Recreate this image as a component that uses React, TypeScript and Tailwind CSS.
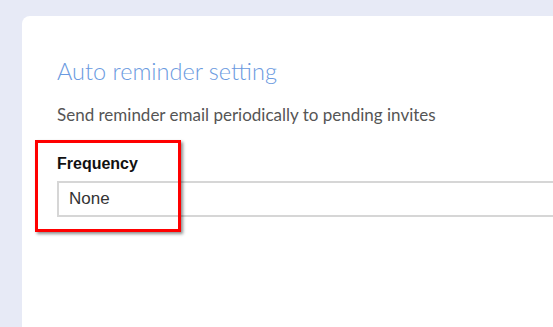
export default function App() {
  return (
    <div className="relative h-[327px] w-[553px] overflow-hidden bg-[#e7eaf6] pl-[22px] pt-[16px]">
      <div className="h-[400px] w-[700px] rounded-tl-[8px] bg-white pl-[35px] pt-[40px]">
        <h1 className="font-['Lato',sans-serif] text-[23.5px] font-light leading-[30px] text-[#6b9ae0]">
          Auto reminder setting
        </h1>
        <p className="mt-[19px] font-['Lato',sans-serif] text-[17px] leading-[20px] text-[#555555]">
          Send reminder email periodically to pending invites
        </p>
        <label className="mt-[30px] block font-['Liberation_Sans',sans-serif] text-[16px] font-bold leading-[18px] text-[#111111]">
          Frequency
        </label>
        <div className="mt-[8px] flex h-[36px] w-[600px] items-center border-2 border-[#d6d6d6] pl-[10px] font-['Liberation_Sans',sans-serif] text-[17px] text-[#333333]">
          None
        </div>
      </div>
      <div className="absolute left-[35px] top-[140px] h-[92px] w-[146px] border-[3px] border-[#ff0000] shadow-[2px_2px_3px_rgba(0,0,0,0.45)]" />
    </div>
  );
}
